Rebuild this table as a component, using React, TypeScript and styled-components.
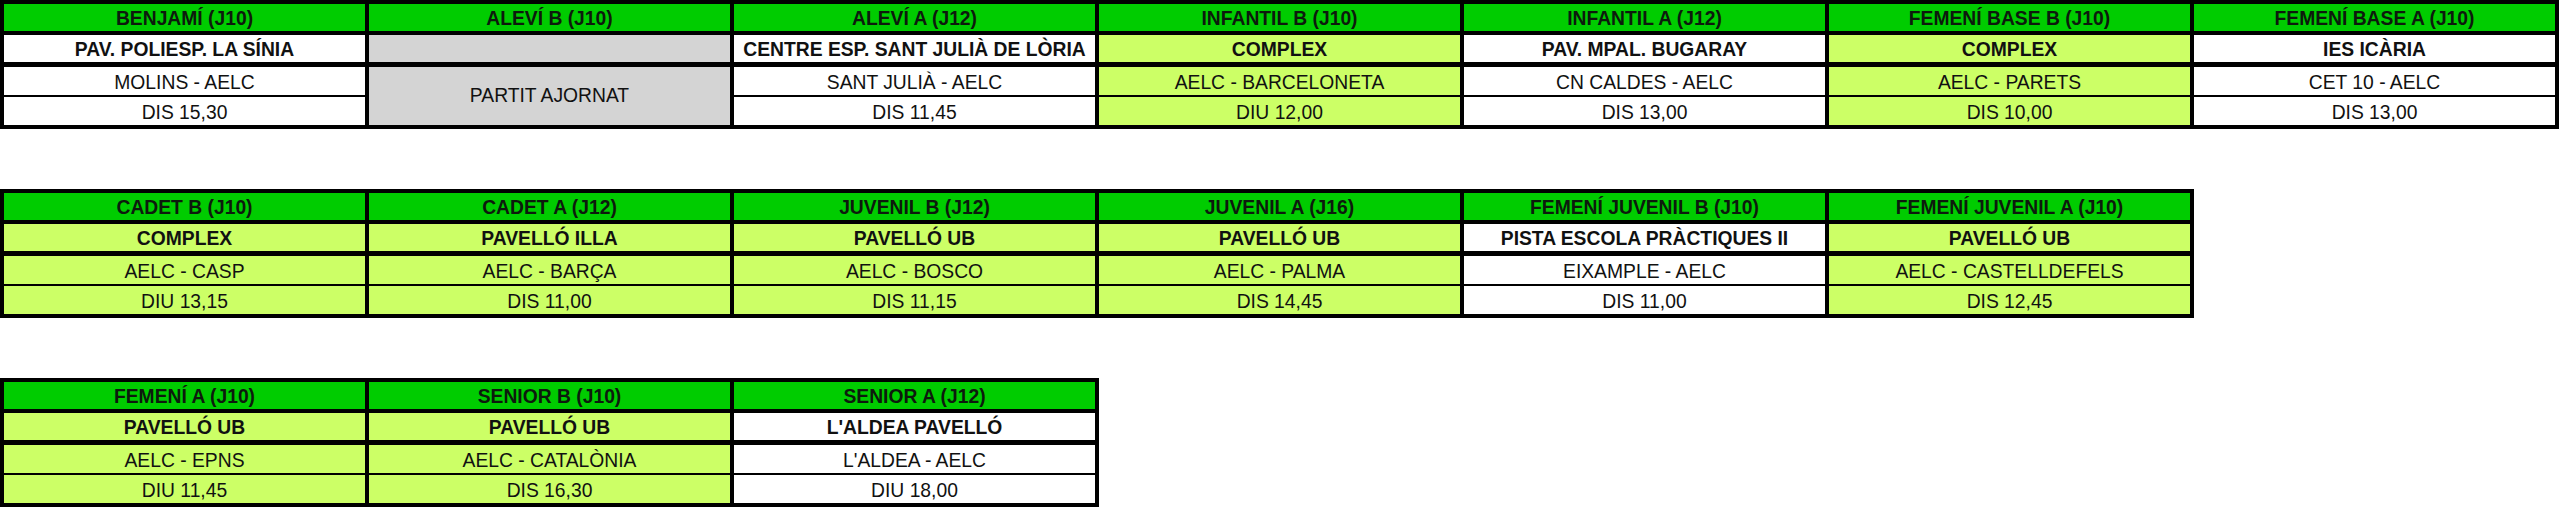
import { createGlobalStyle } from 'styled-components';
import styled from 'styled-components';

const Global = createGlobalStyle`
    html, body {
        margin: 0;
        padding: 0;
        background: #fff;
    }
    body {
        font-family: "Liberation Sans", Arial, sans-serif;
        color: #111;
    }
`;

type Fill = 'white' | 'lime' | 'gray';

type Partit = {
    categoria: string;
    pavello?: string;
    equips?: string;
    hora?: string;
    fons: Fill;
    ajornat?: boolean;
};

const colors: Record<Fill, string> = {
    white: '#ffffff',
    lime: '#ccff66',
    gray: '#d4d4d4',
};

const Pagina = styled.div`
    display: flex;
    flex-direction: column;
    align-items: flex-start;
    gap: 60px;
`;

const Taula = styled.div<{ $cols: number }>`
    display: grid;
    grid-template-columns: repeat(${({ $cols }) => $cols}, 361px);
    grid-template-rows: repeat(4, auto);
    grid-auto-flow: column;
    column-gap: 4px;
    padding: 4px;
    background: #000;
`;

const Cel = styled.div<{ $fill: Fill; $h: number; $sep: number }>`
    display: flex;
    align-items: flex-end;
    justify-content: center;
    height: ${({ $h }) => $h}px;
    margin-bottom: ${({ $sep }) => $sep}px;
    padding-bottom: 1px;
    box-sizing: border-box;
    background: ${({ $fill }) => colors[$fill]};
    font-size: 19.3px;
    white-space: nowrap;
    overflow: hidden;
`;

const Capcalera = styled(Cel)`
    background: #00cc00;
    font-weight: 700;
    color: #0d1a0d;
`;

const Pavello = styled(Cel)`
    font-weight: 700;
`;

const Ajornat = styled(Cel)`
    grid-row: span 2;
    align-items: center;
    padding-bottom: 0;
`;

const taula1: Partit[] = [
    { categoria: 'BENJAMÍ (J10)', pavello: 'PAV. POLIESP. LA SÍNIA', equips: 'MOLINS - AELC', hora: 'DIS 15,30', fons: 'white' },
    { categoria: 'ALEVÍ B (J10)', fons: 'gray', ajornat: true },
    { categoria: 'ALEVÍ A (J12)', pavello: 'CENTRE ESP. SANT JULIÀ DE LÒRIA', equips: 'SANT JULIÀ - AELC', hora: 'DIS 11,45', fons: 'white' },
    { categoria: 'INFANTIL B (J10)', pavello: 'COMPLEX', equips: 'AELC - BARCELONETA', hora: 'DIU 12,00', fons: 'lime' },
    { categoria: 'INFANTIL A (J12)', pavello: 'PAV. MPAL. BUGARAY', equips: 'CN CALDES - AELC', hora: 'DIS 13,00', fons: 'white' },
    { categoria: 'FEMENÍ BASE B (J10)', pavello: 'COMPLEX', equips: 'AELC - PARETS', hora: 'DIS 10,00', fons: 'lime' },
    { categoria: 'FEMENÍ BASE A (J10)', pavello: 'IES ICÀRIA', equips: 'CET 10 - AELC', hora: 'DIS 13,00', fons: 'white' },
];

const taula2: Partit[] = [
    { categoria: 'CADET B (J10)', pavello: 'COMPLEX', equips: 'AELC - CASP', hora: 'DIU 13,15', fons: 'lime' },
    { categoria: 'CADET A (J12)', pavello: 'PAVELLÓ ILLA', equips: 'AELC - BARÇA', hora: 'DIS 11,00', fons: 'lime' },
    { categoria: 'JUVENIL B (J12)', pavello: 'PAVELLÓ UB', equips: 'AELC - BOSCO', hora: 'DIS 11,15', fons: 'lime' },
    { categoria: 'JUVENIL A (J16)', pavello: 'PAVELLÓ UB', equips: 'AELC - PALMA', hora: 'DIS 14,45', fons: 'lime' },
    { categoria: 'FEMENÍ JUVENIL B (J10)', pavello: 'PISTA ESCOLA PRÀCTIQUES II', equips: 'EIXAMPLE - AELC', hora: 'DIS 11,00', fons: 'white' },
    { categoria: 'FEMENÍ JUVENIL A (J10)', pavello: 'PAVELLÓ UB', equips: 'AELC - CASTELLDEFELS', hora: 'DIS 12,45', fons: 'lime' },
];

const taula3: Partit[] = [
    { categoria: 'FEMENÍ A (J10)', pavello: 'PAVELLÓ UB', equips: 'AELC - EPNS', hora: 'DIU 11,45', fons: 'lime' },
    { categoria: 'SENIOR B (J10)', pavello: 'PAVELLÓ UB', equips: 'AELC - CATALÒNIA', hora: 'DIS 16,30', fons: 'lime' },
    { categoria: 'SENIOR A (J12)', pavello: "L'ALDEA PAVELLÓ", equips: "L'ALDEA - AELC", hora: 'DIU 18,00', fons: 'white' },
];

const Columna = ({ p }: { p: Partit }) => (
    <>
        <Capcalera $fill="white" $h={27} $sep={4}>{p.categoria}</Capcalera>
        <Pavello $fill={p.fons} $h={27} $sep={5}>{p.pavello ?? ''}</Pavello>
        {p.ajornat ? (
            <Ajornat $fill={p.fons} $h={58} $sep={0}>PARTIT AJORNAT</Ajornat>
        ) : (
            <>
                <Cel $fill={p.fons} $h={28} $sep={2}>{p.equips}</Cel>
                <Cel $fill={p.fons} $h={28} $sep={0}>{p.hora}</Cel>
            </>
        )}
    </>
);

const Horari = ({ partits }: { partits: Partit[] }) => (
    <Taula $cols={partits.length}>
        {partits.map((p) => <Columna key={p.categoria} p={p} />)}
    </Taula>
);

export default function App() {
    return (
        <>
            <Global />
            <Pagina>
                <Horari partits={taula1} />
                <Horari partits={taula2} />
                <Horari partits={taula3} />
            </Pagina>
        </>
    );
}
